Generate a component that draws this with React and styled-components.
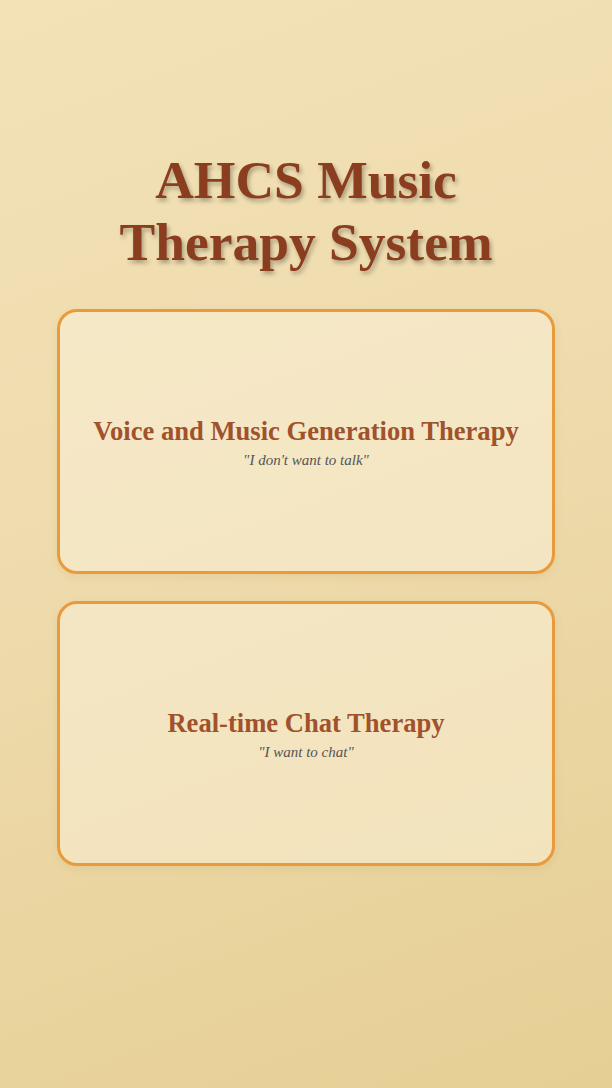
import styled, { createGlobalStyle } from 'styled-components';

const Global = createGlobalStyle`
    html, body {
        margin: 0;
        padding: 0;
    }
    body {
        font-family: "Liberation Serif", "Times New Roman", serif;
        background: linear-gradient(160deg, #f2e2b6 0%, #efdcaf 40%, #e6cf94 100%);
        min-height: 1088px;
    }
`;

const Page = styled.div`
    min-height: 1088px;
    display: flex;
    flex-direction: column;
    align-items: center;
    padding-top: 149px;
    box-sizing: border-box;
`;

const Title = styled.h1`
    margin: 0 0 36px;
    font-size: 53.5px;
    line-height: 62px;
    font-weight: bold;
    color: #8b3d1f;
    text-align: center;
    text-shadow: 2px 3px 4px rgba(0, 0, 0, 0.3);
    max-width: 400px;
`;

const Cards = styled.div`
    display: flex;
    flex-direction: column;
    gap: 27px;
    width: 498px;
`;

const Card = styled.div`
    height: 265px;
    box-sizing: border-box;
    border: 3px solid #e99b3c;
    border-radius: 20px;
    background: rgba(250, 240, 215, 0.55);
    box-shadow: 0 3px 8px rgba(160, 110, 40, 0.1);
    display: flex;
    flex-direction: column;
    align-items: center;
    justify-content: center;
    padding-top: 2px;
    cursor: pointer;
`;

const CardTitle = styled.h2`
    margin: 0 0 5px;
    font-size: 26.6px;
    font-weight: bold;
    color: #a0522d;
`;

const Quote = styled.p`
    margin: 0;
    font-size: 15px;
    font-style: italic;
    color: #555;
`;

const modes = [
    { title: 'Voice and Music Generation Therapy', quote: '"I don\'t want to talk"' },
    { title: 'Real-time Chat Therapy', quote: '"I want to chat"' },
];

export default function App() {
    return (
        <>
            <Global />
            <Page>
                <Title>AHCS Music Therapy System</Title>
                <Cards>
                    {modes.map((m) => (
                        <Card key={m.title}>
                            <CardTitle>{m.title}</CardTitle>
                            <Quote>{m.quote}</Quote>
                        </Card>
                    ))}
                </Cards>
            </Page>
        </>
    );
}
